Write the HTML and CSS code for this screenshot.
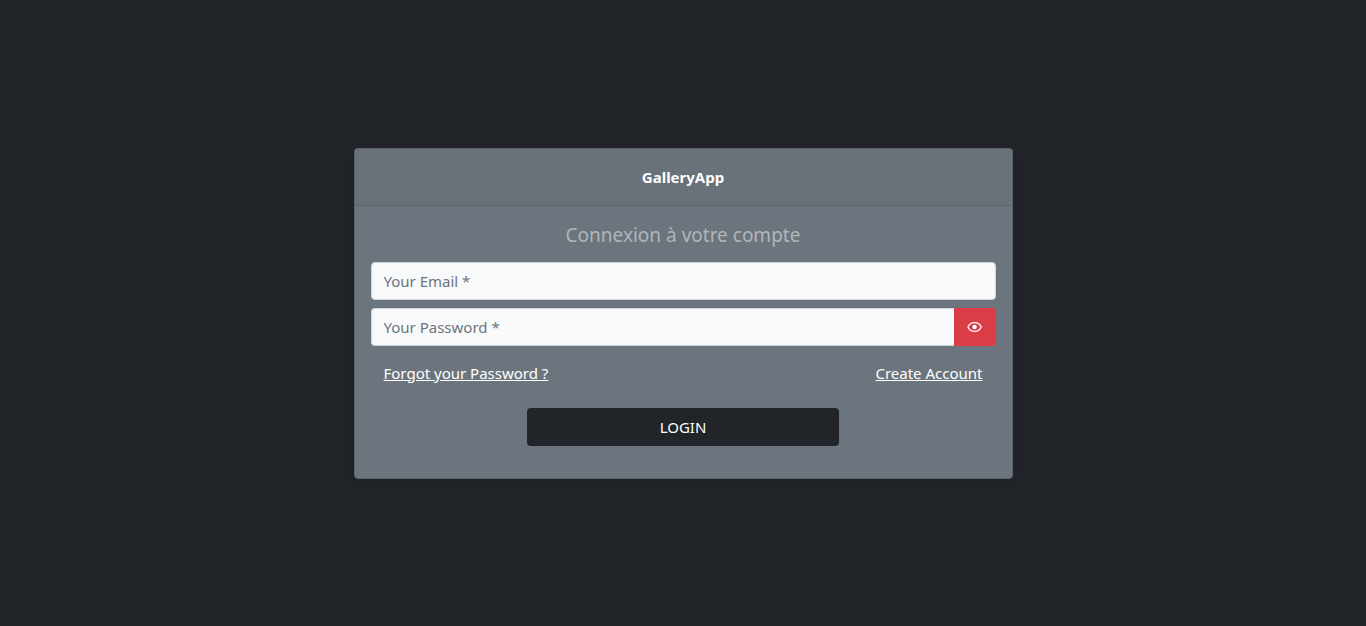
FILE: index.html
```html
<!DOCTYPE html>
<html lang="fr">
<head>
<meta charset="utf-8">
<meta name="viewport" content="width=device-width, initial-scale=1">
<title>GalleryApp</title>
<link rel="stylesheet" href="styles.css">
</head>
<body>
<main class="page">
  <section class="card">
    <header class="card-header"><h1 class="brand">GalleryApp</h1></header>
    <form class="card-body">
      <h2 class="title">Connexion à votre compte</h2>
      <input class="field" type="email" placeholder="Your Email *" aria-label="Your Email">
      <div class="input-group">
        <input class="field field-joined" type="password" placeholder="Your Password *" aria-label="Your Password">
        <button class="reveal" type="button" aria-label="Show password">
          <svg width="16" height="16" viewBox="0 0 16 16" aria-hidden="true">
            <path d="M1 8C2 5.200 4.700 3.600 7.600 3.600S13.200 5.200 14.200 8C13.200 10.800 10.500 12.400 7.600 12.400S2 10.800 1 8z" fill="none" stroke="currentColor" stroke-width="1.300" stroke-linejoin="round"/>
            <circle cx="7.600" cy="8" r="2.200" fill="currentColor"/>
          </svg>
        </button>
      </div>
      <nav class="links">
        <a class="link" href="#">Forgot your Password ?</a>
        <a class="link" href="#">Create Account</a>
      </nav>
      <button class="login" type="submit">LOGIN</button>
    </form>
  </section>
</main>
</body>
</html>
```
FILE: styles.css
```css
* { box-sizing: border-box; }
body {
  margin: 0;
  background: #212529;
  color: #fff;
  font: 15px/24px "Noto Sans", sans-serif;
}
.page {
  min-height: 100vh;
  display: flex;
  align-items: center;
  justify-content: center;
}
.card {
  width: 100%;
  max-width: 659px;
  background: #6c757d;
  border: 1px solid #5c646b;
  border-radius: 4px;
  box-shadow: 0 4px 12px rgba(0, 0, 0, .15);
}
.card-header {
  padding: 16px;
  background: #697179;
  border-bottom: 1px solid #5c646b;
  text-align: center;
}
.brand { margin: 0; font-size: 15px; line-height: 24px; font-weight: 700; }
.card-body {
  padding: 16px 16px 32px;
  display: flex;
  flex-direction: column;
  gap: 8px;
}
.title {
  margin: 0 0 6px;
  font-size: 19px;
  line-height: 26px;
  font-weight: 400;
  text-align: center;
  color: #b0b5b9;
}
.field {
  width: 100%;
  height: 38px;
  padding: 6px 12px;
  border: 1px solid #ced4da;
  border-radius: 4px;
  background: #f8f9fa;
  color: #212529;
  font: inherit;
}
.field::placeholder { color: #6c757d; opacity: 1; }
.input-group { display: flex; }
.field-joined { flex: 1; border-radius: 4px 0 0 4px; border-right: 0; }
.reveal {
  display: flex;
  align-items: center;
  padding: 0 13px;
  border: 0;
  border-radius: 0 4px 4px 0;
  background: #dc3c46;
  color: #fff;
}
.links { display: flex; justify-content: space-between; padding: 7px 13px; }
.link { color: #fff; }
.login {
  align-self: center;
  width: 50%;
  height: 38px;
  margin-top: 8px;
  border: 0;
  border-radius: 4px;
  background: #212529;
  color: #fff;
  font: inherit;
}
```
